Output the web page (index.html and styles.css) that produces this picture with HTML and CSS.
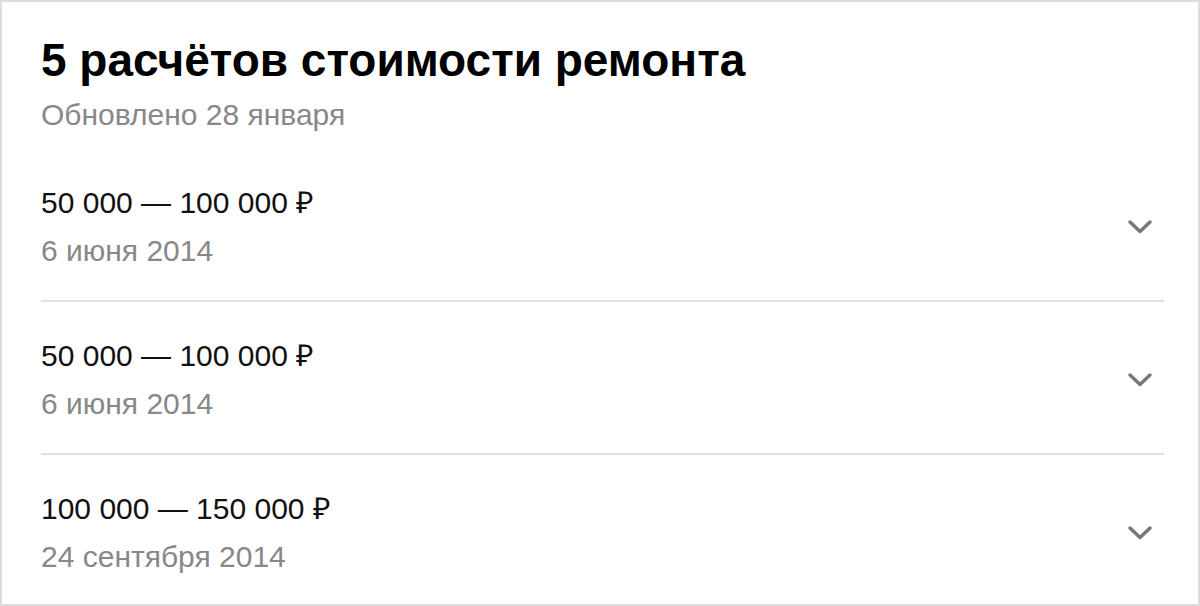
FILE: index.html
```html
<html>
  <head>
    <title>Расчёты стоимости ремонта</title>
    <meta content="text/html;charset=utf-8" http-equiv="Content-Type" />
    <link rel="stylesheet" href="styles.css">
  </head>
  <body>
    <div class="card">
      <h1 class="title">5 расчётов стоимости ремонта</h1>
      <p class="updated">Обновлено 28 января</p>
      <ul class="estimates">
        <li class="estimate">
          <div class="estimate-info">
            <p class="price">50 000 — 100 000 ₽</p>
            <p class="date">6 июня 2014</p>
          </div>
          <svg class="chevron" width="26" height="16" viewBox="0 0 26 16">
            <path d="M3 3 L13 12.5 L23 3" />
          </svg>
        </li>
        <li class="estimate">
          <div class="estimate-info">
            <p class="price">50 000 — 100 000 ₽</p>
            <p class="date">6 июня 2014</p>
          </div>
          <svg class="chevron" width="26" height="16" viewBox="0 0 26 16">
            <path d="M3 3 L13 12.5 L23 3" />
          </svg>
        </li>
        <li class="estimate">
          <div class="estimate-info">
            <p class="price">100 000 — 150 000 ₽</p>
            <p class="date">24 сентября 2014</p>
          </div>
          <svg class="chevron" width="26" height="16" viewBox="0 0 26 16">
            <path d="M3 3 L13 12.5 L23 3" />
          </svg>
        </li>
      </ul>
    </div>
  </body>
</html>
```

FILE: styles.css
```css
html,
body {
  margin: 0;
  padding: 0;
  background-color: #fff;
}
body {
  font-family: 'Liberation Sans', Arial, sans-serif;
}
.card {
  box-sizing: border-box;
  height: 606px;
  overflow: hidden;
  border: 2px solid #dcdcdc;
  padding: 31px 34px 0 39px;
}
.title {
  margin: 0;
  font-size: 46px;
  line-height: 54px;
  font-weight: bold;
  color: #000;
}
.updated {
  margin: 10px 0 0;
  font-size: 30px;
  line-height: 36px;
  color: #888;
}
.estimates {
  list-style: none;
  margin: 16px 0 0;
  padding: 0;
}
.estimate {
  display: flex;
  align-items: center;
  justify-content: space-between;
  padding: 36px 0 31px;
  border-bottom: 2px solid #e0e0e0;
}
.estimate:last-child {
  border-bottom: none;
}
.price,
.date {
  margin: 0;
  font-size: 30px;
  line-height: 36px;
}
.price {
  color: #111;
}
.date {
  margin-top: 12px;
  color: #888;
}
.chevron {
  margin: 0 11px 0 0;
}
.chevron path {
  fill: none;
  stroke: #777;
  stroke-width: 3.5;
  stroke-linecap: round;
  stroke-linejoin: round;
}
```
